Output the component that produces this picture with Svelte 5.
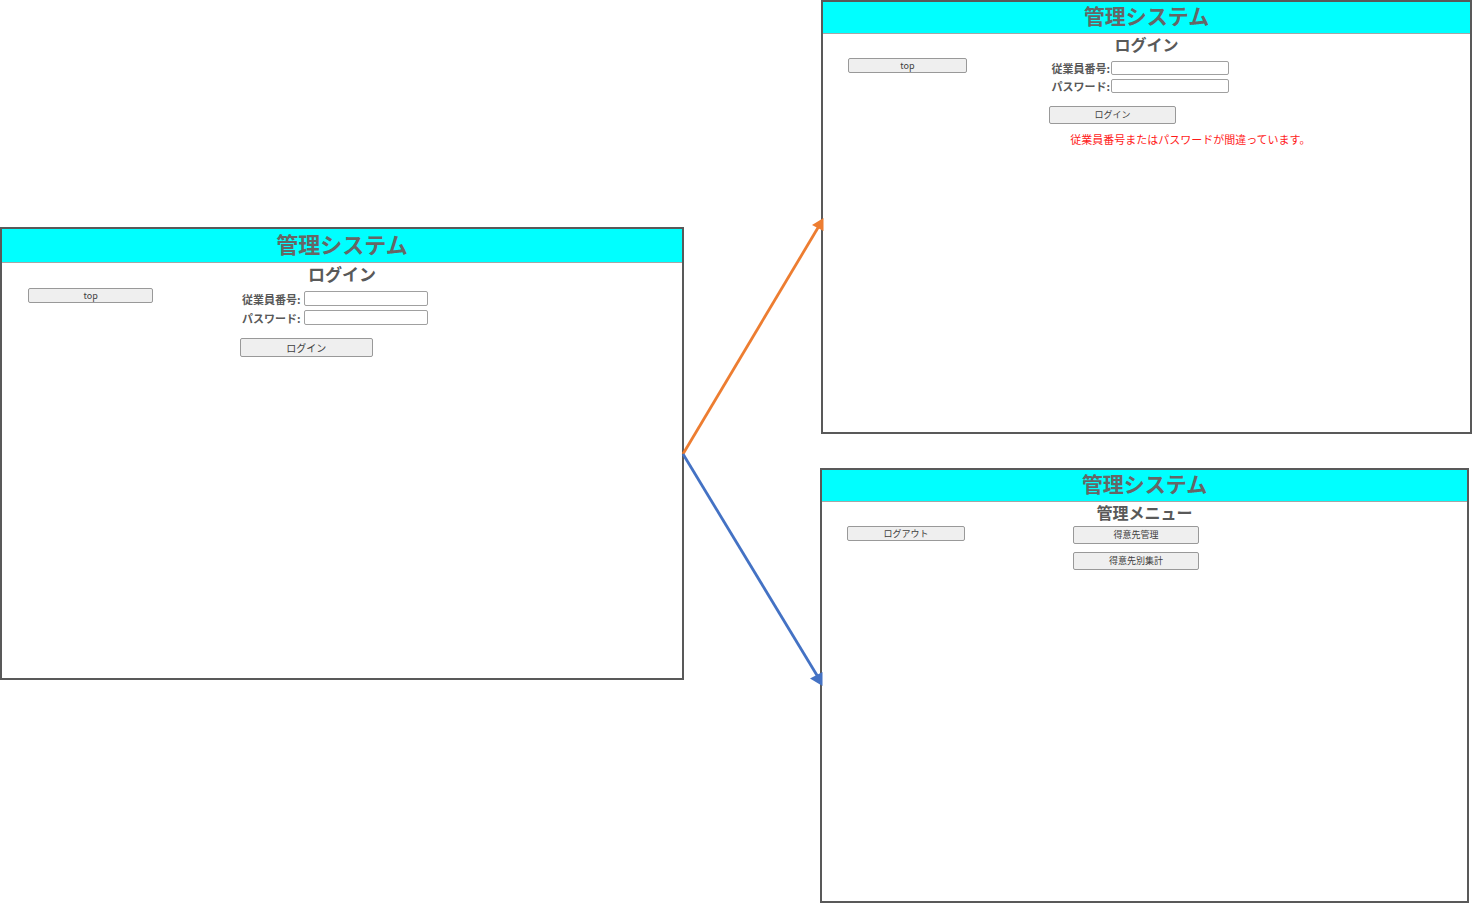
<script>
  const title = '管理システム';
</script>

{#snippet loginForm(id, error)}
  <form class="login" onsubmit={(e) => e.preventDefault()}>
    <div class="field">
      <label for="{id}-number">従業員番号:</label>
      <input id="{id}-number" type="text" />
    </div>
    <div class="field">
      <label for="{id}-password">パスワード:</label>
      <input id="{id}-password" type="password" />
    </div>
    <button class="action" type="submit">ログイン</button>
    {#if error}
      <p class="error">{error}</p>
    {/if}
  </form>
{/snippet}

<main class="flow">
  <section class="screen large">
    <header><h1>{title}</h1></header>
    <h2>ログイン</h2>
    <div class="body">
      <nav><button type="button">top</button></nav>
      {@render loginForm('start', '')}
    </div>
  </section>

  <svg class="arrows" viewBox="0 0 137 903" aria-hidden="true">
    <path d="M-1 454L135 226" stroke="#ed7d31" />
    <path class="head" d="M2.500 218L-9 225L2.500 231Z" transform="translate(137 0)" fill="#ed7d31" />
    <path d="M-1 454L134 677" stroke="#4472c4" />
    <path class="head" d="M1.500 686L-11 678.500L1.500 672Z" transform="translate(137 0)" fill="#4472c4" />
  </svg>

  <div class="results">
    <section class="screen">
      <header><h1>{title}</h1></header>
      <h2>ログイン</h2>
      <div class="body">
        <nav><button type="button">top</button></nav>
        {@render loginForm('retry', '従業員番号またはパスワードが間違っています。')}
      </div>
    </section>

    <section class="screen menu-screen">
      <header><h1>{title}</h1></header>
      <h2>管理メニュー</h2>
      <div class="body">
        <nav><button type="button">ログアウト</button></nav>
        <div class="menu">
          <button class="action" type="button">得意先管理</button>
          <button class="action" type="button">得意先別集計</button>
        </div>
      </div>
    </section>
  </div>
</main>

<style>
  :global(body) {
    margin: 0;
    background: #fff;
  }

  .flow {
    display: grid;
    grid-template-columns: 684fr 137fr 651fr;
    align-items: center;
    font-family: "Noto Sans CJK JP", "Noto Sans", sans-serif;
    color: #595959;
  }

  .screen {
    box-sizing: border-box;
    aspect-ratio: 3 / 2;
    border: 2px solid #595959;
    background: #fff;
  }

  .large {
    aspect-ratio: 684 / 453;
    margin-top: 4px;
  }

  .results {
    display: flex;
    flex-direction: column;
    gap: 34px;
  }

  .menu-screen {
    aspect-ratio: 649 / 435;
    margin: 0 3px 0 -1px;
  }

  .arrows {
    display: block;
    width: 100%;
    align-self: start;
    overflow: visible;
    position: relative;
    z-index: 1;
    fill: none;
    stroke-width: 2.8;
  }

  .head {
    stroke: none;
  }

  header {
    padding-bottom: 4px;
    background: #00ffff;
    border-bottom: 1px solid #a6a6a6;
  }

  h1,
  h2,
  p {
    margin: 0;
    text-align: center;
  }

  h1 {
    font-size: 21px;
    line-height: 27px;
    color: #666;
  }

  h2 {
    margin-bottom: 3px;
    font-size: 16px;
    line-height: 21px;
  }

  .large h1 {
    font-size: 22px;
    line-height: 29px;
  }

  .large h2 {
    font-size: 17px;
    line-height: 22px;
  }

  .body {
    display: grid;
    grid-template-columns: 35% 65%;
    align-items: start;
  }

  nav {
    padding-left: 11%;
  }

  button {
    display: block;
    box-sizing: border-box;
    height: 15px;
    padding: 0;
    border: 1px solid #999;
    border-radius: 2px;
    background: #efefef;
    color: #404040;
    font: inherit;
    font-size: 9px;
    line-height: 12px;
  }

  nav button {
    width: 59%;
  }

  .action {
    width: 30%;
    height: 18px;
  }

  .login {
    display: flex;
    flex-direction: column;
    gap: 4px;
    padding-top: 3px;
  }

  .field {
    display: flex;
    align-items: center;
  }

  label {
    box-sizing: border-box;
    width: 62px;
    padding-left: 2px;
    font-size: 11px;
    font-weight: 700;
    line-height: 14px;
    white-space: nowrap;
  }

  .large label {
    width: 64px;
  }

  input {
    box-sizing: border-box;
    width: 28%;
    height: 14px;
    padding: 0 2px;
    border: 1px solid #a0a0a0;
    border-radius: 2px;
    background: #fff;
    font: inherit;
    font-size: 9px;
  }

  .large input {
    height: 15px;
  }

  .login .action {
    margin-top: 9px;
  }

  .large .action {
    font-size: 10px;
    height: 19px;
  }

  .error {
    width: 67%;
    padding-top: 3px;
    color: #ff1a1a;
    font-size: 11px;
    line-height: 16px;
    white-space: nowrap;
  }

  .menu {
    display: flex;
    flex-direction: column;
    gap: 8px;
    padding-left: 6%;
  }

  .menu .action {
    width: 32%;
  }
</style>
